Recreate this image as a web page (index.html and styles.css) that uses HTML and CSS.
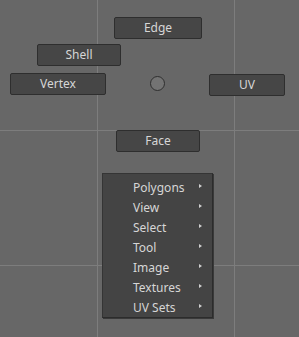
FILE: index.html
```html
<!DOCTYPE html>
<html>
<head>
<meta charset="utf-8">
<link rel="stylesheet" href="styles.css">
</head>
<body>
<div class="canvas">
  <div class="gline v v1"></div>
  <div class="gline v v2"></div>
  <div class="gline h h1"></div>
  <div class="gline h h2"></div>

  <div class="btn b-edge">Edge</div>
  <div class="btn b-shell">Shell</div>
  <div class="btn b-vertex">Vertex</div>
  <div class="btn b-uv">UV</div>
  <div class="btn b-face">Face</div>
  <div class="center-dot"></div>

  <div class="menu">
    <div class="item"><span>Polygons</span><i class="arrow"></i></div>
    <div class="item"><span>View</span><i class="arrow"></i></div>
    <div class="item"><span>Select</span><i class="arrow"></i></div>
    <div class="item"><span>Tool</span><i class="arrow"></i></div>
    <div class="item"><span>Image</span><i class="arrow"></i></div>
    <div class="item"><span>Textures</span><i class="arrow"></i></div>
    <div class="item"><span>UV Sets</span><i class="arrow"></i></div>
  </div>
</div>
</body>
</html>
```
FILE: styles.css
```css
html, body {
  margin: 0;
  padding: 0;
  background: #676767;
}
.canvas {
  position: relative;
  width: 299px;
  height: 337px;
  overflow: hidden;
  background: #676767;
  font-family: "Noto Sans", "Open Sans", sans-serif;
  font-size: 12px;
  color: #d6d6d6;
}
.gline {
  position: absolute;
  background: #7d7d7d;
}
.gline.v { top: 0; bottom: 0; width: 1px; }
.gline.h { left: 0; right: 0; height: 1px; }
.v1 { left: 97px; }
.v2 { left: 234px; }
.h1 { top: 130px; }
.h2 { top: 265px; }

.btn {
  position: absolute;
  box-sizing: border-box;
  height: 22px;
  background: #464646;
  border: 1px solid #2e2e2e;
  border-radius: 2px;
  display: flex;
  align-items: center;
  justify-content: center;
  line-height: 1;
  padding-bottom: 1px;
}
.b-edge { left: 114px; top: 17px; width: 88px; }
.b-shell { left: 37px; top: 44px; width: 84px; }
.b-vertex { left: 10px; top: 73px; width: 96px; }
.b-uv { left: 209px; top: 74px; width: 76px; }
.b-face { left: 116px; top: 130px; width: 84px; }

.center-dot {
  position: absolute;
  left: 150px;
  top: 76px;
  width: 15px;
  height: 15px;
  box-sizing: border-box;
  border-radius: 50%;
  background: #737373;
  border: 1.5px solid #2f2f2f;
}

.menu {
  position: absolute;
  left: 102px;
  top: 173px;
  width: 111px;
  height: 145px;
  box-sizing: border-box;
  background: #444444;
  border: 1px solid #353535;
  border-right-color: #2c2c2c;
  border-bottom-color: #2c2c2c;
  box-shadow: 1px 1px 0 #3a3a3a;
  padding-top: 3px;
  display: flex;
  flex-direction: column;
}
.item {
  height: 20.3px;
  display: flex;
  align-items: center;
  padding-left: 30px;
  position: relative;
}
.arrow {
  position: absolute;
  left: 96px;
  top: 50%;
  margin-top: -3px;
  width: 0;
  height: 0;
  border-top: 2px solid transparent;
  border-bottom: 2px solid transparent;
  border-left: 3px solid #d0d0d0;
}
```
